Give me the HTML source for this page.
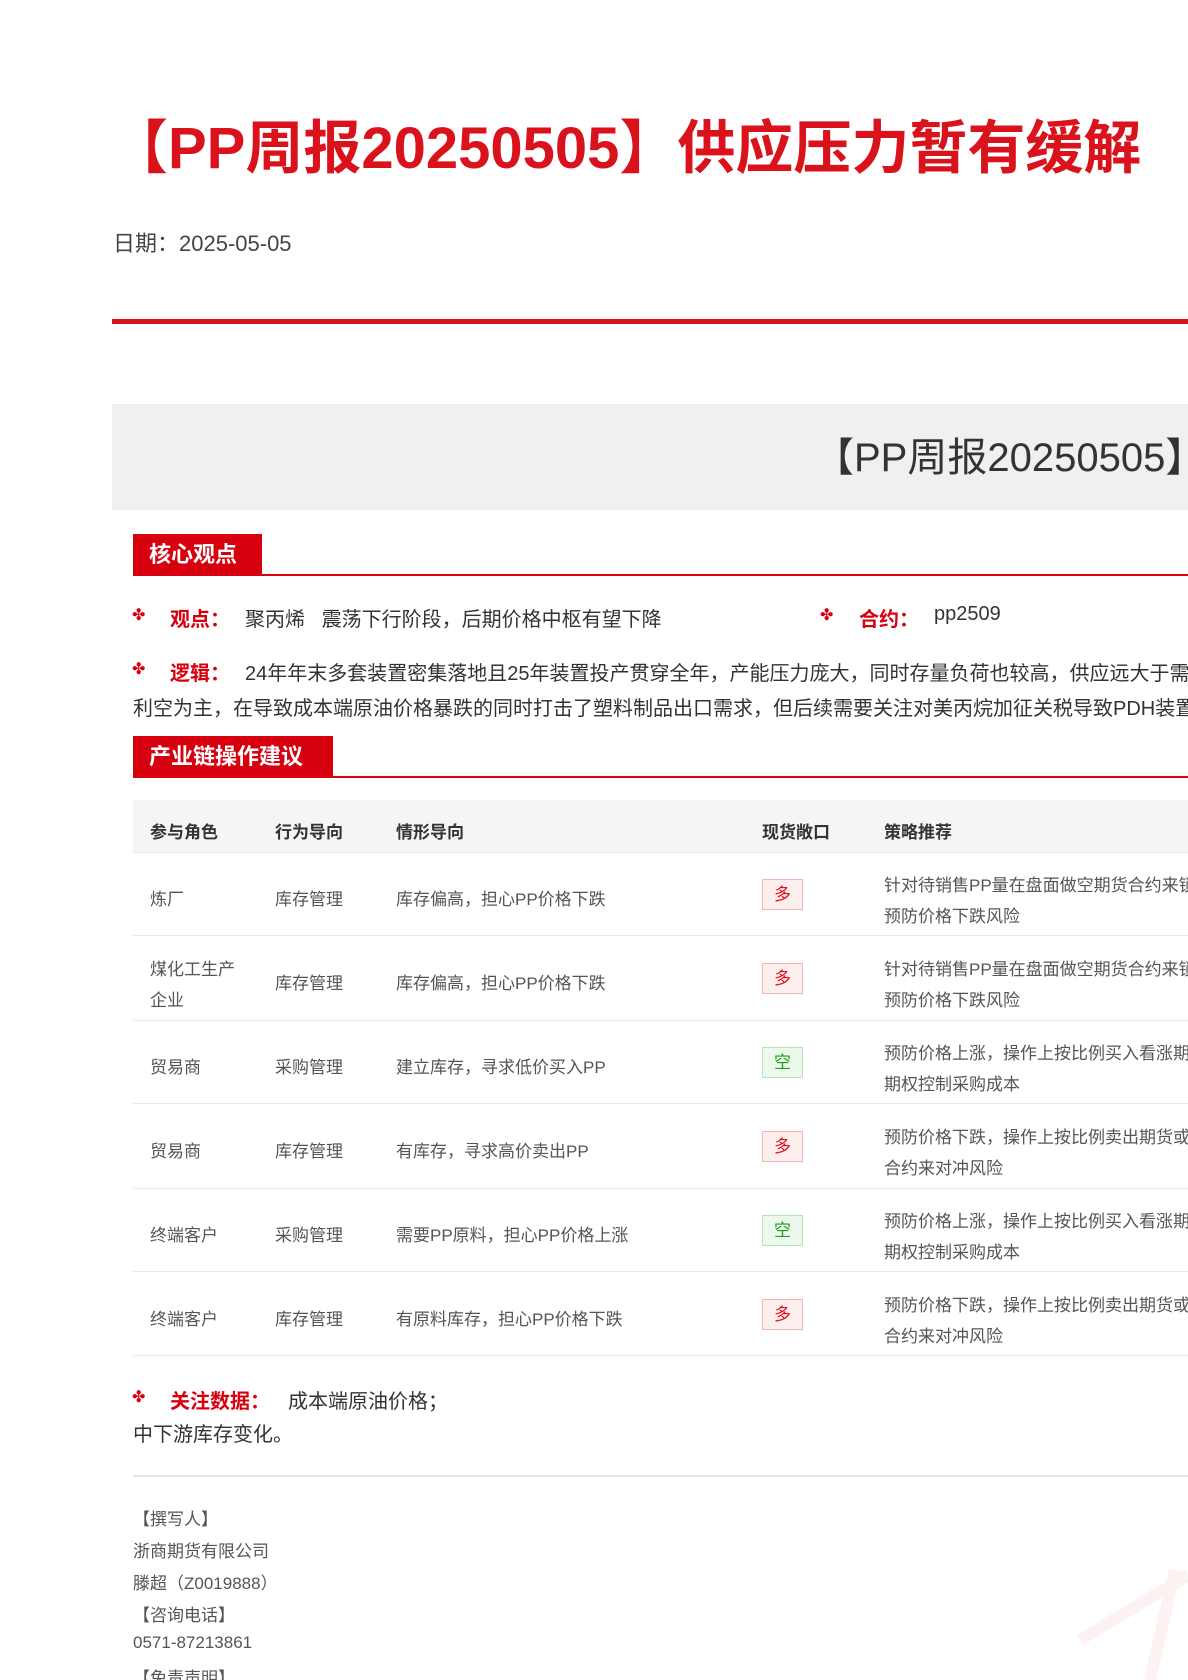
<!DOCTYPE html>
<html><head><meta charset="utf-8"><style>
html,body{margin:0;padding:0;}
body{width:1188px;height:1680px;overflow:hidden;position:relative;background:#fff;font-family:"Liberation Sans","Noto Sans CJK SC",sans-serif;color:#333;}
#w{position:absolute;left:0;top:0;width:1188px;height:1680px;overflow:hidden;}
.a{position:absolute;white-space:nowrap;}
.red{color:#d9121b;}
.sec{position:absolute;left:133px;height:42px;background:#d7000f;color:#fff;font-size:22px;font-weight:bold;line-height:42px;padding:0 0 0 16px;box-sizing:border-box;}
.secline{position:absolute;left:133px;right:0;height:2px;background:#d7000f;}
.bul{position:absolute;color:#d7000f;font-size:16px;}
.lab{position:absolute;color:#d7000f;font-size:20px;font-weight:bold;white-space:nowrap;}
.txt{position:absolute;font-size:20px;white-space:nowrap;color:#333;}
.th{position:absolute;font-size:17px;font-weight:bold;color:#333;white-space:nowrap;}
.td{position:absolute;font-size:17px;color:#555;white-space:nowrap;}
.badge{position:absolute;left:762px;width:41px;height:31px;box-sizing:border-box;font-size:17px;text-align:center;line-height:29px;}
.duo{background:#fdeeee;border:1px solid #f5b5b5;color:#e0101a;}
.kong{background:#ecf8ec;border:1px solid #b7e3b7;color:#1aa31a;}
.rl{position:absolute;left:133px;right:0;height:1px;background:#e4e8f0;}
.ft{position:absolute;left:133px;font-size:17px;color:#555;white-space:nowrap;}
</style></head><body><div id="w">
<div class="a red" style="left:110px;top:114px;font-size:58px;font-weight:bold;line-height:70px;">【PP周报20250505】供应压力暂有缓解</div>
<div class="a" style="left:113px;top:226px;font-size:22px;color:#444;">日期：2025-05-05</div>
<div class="a" style="left:112px;top:319px;right:0;height:5px;background:#d9121b;"></div>

<div class="a" style="left:112px;top:404px;right:0;height:106px;background:#f0f0f0;overflow:hidden;">
<div class="a" style="left:702px;top:31px;font-size:40px;color:#333;line-height:46px;">【PP周报20250505】供应压力暂有缓解</div>
</div>

<div class="secline" style="top:574px;"></div>
<div class="sec" style="top:534px;width:129px;">核心观点</div>

<div class="bul" style="left:132px;top:605px;">✤</div>
<div class="lab" style="left:170px;top:603px;">观点：</div>
<div class="txt" style="left:245px;top:603px;">聚丙烯&nbsp;&nbsp;&nbsp;震荡下行阶段，后期价格中枢有望下降</div>
<div class="bul" style="left:820px;top:605px;">✤</div>
<div class="lab" style="left:859px;top:603px;">合约：</div>
<div class="txt" style="left:934px;top:603px;">pp2509</div>

<div class="bul" style="left:132px;top:659px;">✤</div>
<div class="lab" style="left:170px;top:657px;">逻辑：</div>
<div class="txt" style="left:245px;top:657px;">24年年末多套装置密集落地且25年装置投产贯穿全年，产能压力庞大，同时存量负荷也较高，供应远大于需求增长</div>
<div class="txt" style="left:133px;top:692px;">利空为主，在导致成本端原油价格暴跌的同时打击了塑料制品出口需求，但后续需要关注对美丙烷加征关税导致PDH装置</div>

<div class="secline" style="top:776px;"></div>
<div class="sec" style="top:736px;width:200px;">产业链操作建议</div>

<div class="a" style="left:133px;top:800px;right:0;height:52px;background:#f4f5f7;border-bottom:1px solid #e4e8f0;"></div>
<div class="th" style="left:150px;top:818px;">参与角色</div>
<div class="th" style="left:275px;top:818px;">行为导向</div>
<div class="th" style="left:396px;top:818px;">情形导向</div>
<div class="th" style="left:762px;top:818px;">现货敞口</div>
<div class="th" style="left:884px;top:818px;">策略推荐</div>

<div class="td" style="left:150px;top:885px;">炼厂</div>
<div class="td" style="left:275px;top:885px;">库存管理</div>
<div class="td" style="left:396px;top:885px;">库存偏高，担心PP价格下跌</div>
<div class="badge duo" style="top:879px;">多</div>
<div class="td" style="left:884px;top:870px;line-height:31px;">针对待销售PP量在盘面做空期货合约来锁定利润<br>预防价格下跌风险</div>
<div class="rl" style="top:935px;"></div>

<div class="td" style="left:150px;top:954px;line-height:31px;">煤化工生产<br>企业</div>
<div class="td" style="left:275px;top:969px;">库存管理</div>
<div class="td" style="left:396px;top:969px;">库存偏高，担心PP价格下跌</div>
<div class="badge duo" style="top:963px;">多</div>
<div class="td" style="left:884px;top:954px;line-height:31px;">针对待销售PP量在盘面做空期货合约来锁定利润<br>预防价格下跌风险</div>
<div class="rl" style="top:1020px;"></div>

<div class="td" style="left:150px;top:1053px;">贸易商</div>
<div class="td" style="left:275px;top:1053px;">采购管理</div>
<div class="td" style="left:396px;top:1053px;">建立库存，寻求低价买入PP</div>
<div class="badge kong" style="top:1047px;">空</div>
<div class="td" style="left:884px;top:1038px;line-height:31px;">预防价格上涨，操作上按比例买入看涨期权或买入<br>期权控制采购成本</div>
<div class="rl" style="top:1103px;"></div>

<div class="td" style="left:150px;top:1137px;">贸易商</div>
<div class="td" style="left:275px;top:1137px;">库存管理</div>
<div class="td" style="left:396px;top:1137px;">有库存，寻求高价卖出PP</div>
<div class="badge duo" style="top:1131px;">多</div>
<div class="td" style="left:884px;top:1122px;line-height:31px;">预防价格下跌，操作上按比例卖出期货或做空期货<br>合约来对冲风险</div>
<div class="rl" style="top:1188px;"></div>

<div class="td" style="left:150px;top:1221px;">终端客户</div>
<div class="td" style="left:275px;top:1221px;">采购管理</div>
<div class="td" style="left:396px;top:1221px;">需要PP原料，担心PP价格上涨</div>
<div class="badge kong" style="top:1215px;">空</div>
<div class="td" style="left:884px;top:1206px;line-height:31px;">预防价格上涨，操作上按比例买入看涨期权或买入<br>期权控制采购成本</div>
<div class="rl" style="top:1271px;"></div>

<div class="td" style="left:150px;top:1305px;">终端客户</div>
<div class="td" style="left:275px;top:1305px;">库存管理</div>
<div class="td" style="left:396px;top:1305px;">有原料库存，担心PP价格下跌</div>
<div class="badge duo" style="top:1299px;">多</div>
<div class="td" style="left:884px;top:1290px;line-height:31px;">预防价格下跌，操作上按比例卖出期货或做空期货<br>合约来对冲风险</div>
<div class="rl" style="top:1355px;"></div>

<div class="bul" style="left:132px;top:1387px;">✤</div>
<div class="lab" style="left:170px;top:1385px;">关注数据：</div>
<div class="txt" style="left:288px;top:1385px;">成本端原油价格；</div>
<div class="txt" style="left:133px;top:1418px;">中下游库存变化。</div>

<div class="a" style="left:133px;top:1475px;right:0;height:2px;background:#e6e6e6;"></div>

<svg class="a" style="left:900px;top:1500px;" width="288" height="180"><path d="M250 180 L275 70 M180 140 L288 75" stroke="#fdf2f2" stroke-width="12" fill="none"/></svg>

<div class="ft" style="top:1505px;">【撰写人】</div>
<div class="ft" style="top:1537px;">浙商期货有限公司</div>
<div class="ft" style="top:1569px;">滕超（Z0019888）</div>
<div class="ft" style="top:1601px;">【咨询电话】</div>
<div class="ft" style="top:1633px;">0571-87213861</div>
<div class="ft" style="top:1664px;">【免责声明】</div>
</div></body></html>
